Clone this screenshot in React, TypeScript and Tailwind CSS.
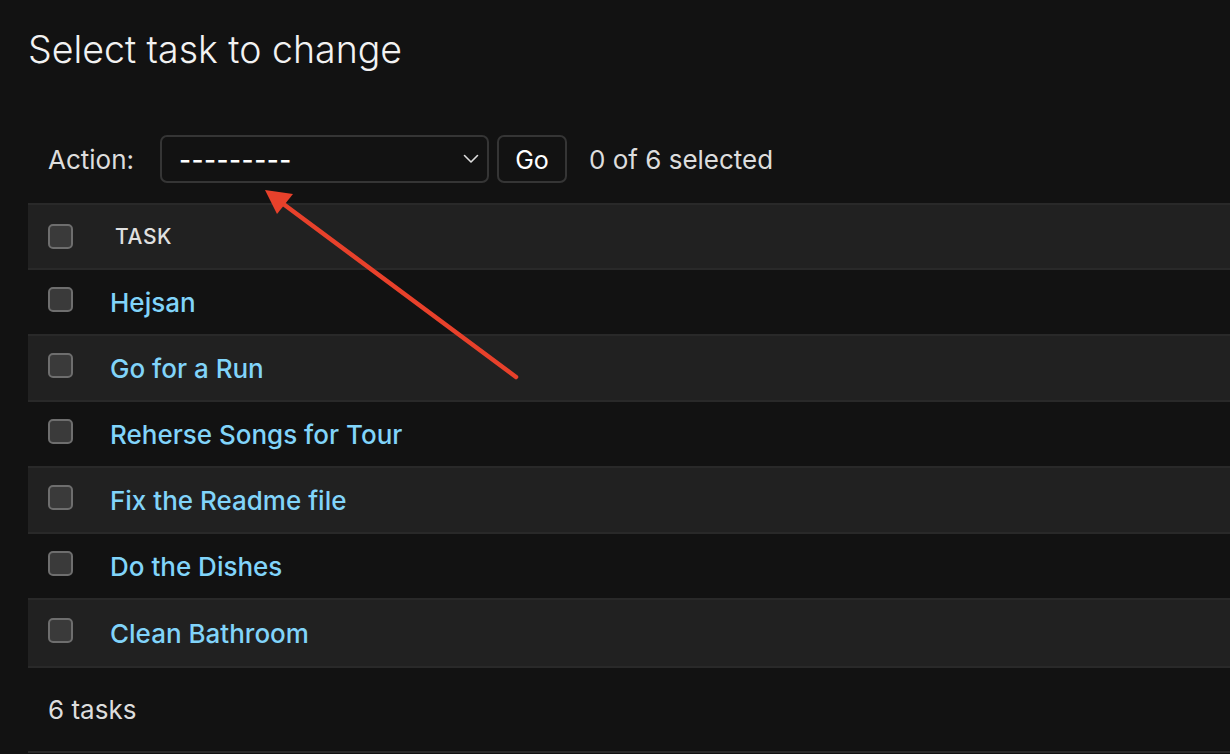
import React from 'react';

const tasks = [
  'Hejsan',
  'Go for a Run',
  'Reherse Songs for Tour',
  'Fix the Readme file',
  'Do the Dishes',
  'Clean Bathroom',
];

const Checkbox: React.FC = () => (
  <span className="block w-[25px] h-[25px] rounded-[5px] border-2 border-[#6e6e6e] bg-[#3a3a3a]" />
);

const App: React.FC = () => {
  return (
    <div
      className="relative w-[1230px] h-[754px] overflow-hidden bg-[#121212] text-[#eeeeee]"
      style={{ fontFamily: 'Inter, "Noto Sans", sans-serif' }}
    >
      <div className="pl-[28px]">
        <h1 className="pt-[25px] text-[37.5px] leading-[50px] font-light text-[#f2f2f2]">
          Select task to change
        </h1>

        {/* Action bar */}
        <div className="mt-[60px] flex items-center h-[48px] pl-[20px] text-[26px] text-[#dddddd]">
          <span className="w-[112px]">Action:</span>
          <div className="relative flex items-center w-[329px] h-[48px] rounded-[7px] border-2 border-[#353535] bg-[#121212] pl-[17px] text-white">
            <span className="tracking-[0.5px] font-medium">---------</span>
            <svg
              className="absolute right-[8px] top-[17px]"
              width="16"
              height="10"
              viewBox="0 0 16 10"
              fill="none"
              stroke="#dddddd"
              strokeWidth="1.6"
              strokeLinecap="round"
              strokeLinejoin="round"
            >
              <path d="M1.5 1.5 L8 8 L14.5 1.5" />
            </svg>
          </div>
          <button className="ml-[8px] w-[70px] h-[48px] pt-[3px] rounded-[7px] border-2 border-[#353535] bg-[#121212] text-white text-[25px]">
            Go
          </button>
          <span className="ml-[22px] text-[#dddddd]">0 of 6 selected</span>
        </div>

        {/* Table */}
        <div className="mt-[20px]">
          <div className="flex items-center h-[67px] bg-[#212121] border-t-2 border-b-2 border-[#292929]">
            <div className="pl-[20px] w-[87px]">
              <Checkbox />
            </div>
            <span className="text-[21px] font-medium tracking-[0.6px] text-[#e0e0e0] uppercase">
              Task
            </span>
          </div>
          {tasks.map((t, i) => (
            <div
              key={t}
              className={
                'flex items-center border-b-2 border-[#292929] ' +
                (i === tasks.length - 1 ? 'h-[68px] ' : 'h-[66px] ') +
                (i % 2 === 1 ? 'bg-[#212121]' : 'bg-[#121212]')
              }
            >
              <div className="pl-[20px] w-[82px] -mt-[6px]">
                <Checkbox />
              </div>
              <a className="text-[26px] font-medium text-[#81d4fa]">{t}</a>
            </div>
          ))}
          <div className="flex items-center h-[85px] pl-[20px] border-b-2 border-[#292929] text-[26px] text-[#dddddd]">
            6 tasks
          </div>
        </div>
      </div>

      {/* Annotation arrow */}
      <svg
        className="absolute left-0 top-0 pointer-events-none"
        width="1230"
        height="754"
        viewBox="0 0 1230 754"
      >
        <line x1="516" y1="377" x2="282" y2="203" stroke="#e8412b" strokeWidth="4.5" strokeLinecap="round" />
        <polygon points="265,190 293,194 277,214" fill="#e8412b" />
      </svg>
    </div>
  );
};

export default App;
